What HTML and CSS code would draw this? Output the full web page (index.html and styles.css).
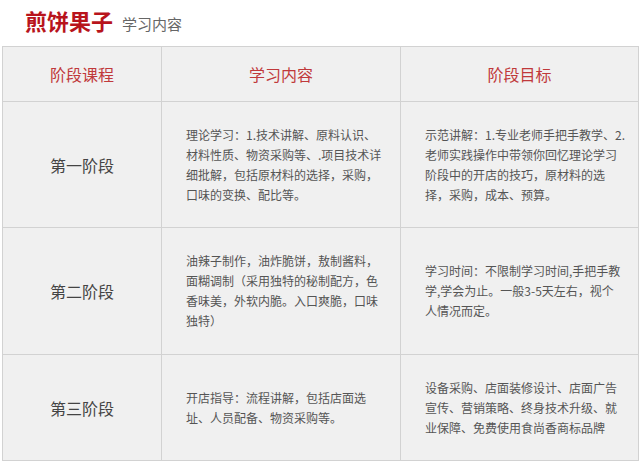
FILE: index.html
```html
<!DOCTYPE html>
<html lang="zh-CN">
<head>
<meta charset="utf-8">
<title>煎饼果子 学习内容</title>
<link rel="stylesheet" href="styles.css">
</head>
<body>
<div class="page">
  <header class="heading">
    <h1 class="title">煎饼果子</h1>
    <span class="subtitle">学习内容</span>
  </header>
  <table class="course">
    <colgroup>
      <col class="c1"><col class="c2"><col class="c3">
    </colgroup>
    <thead>
      <tr class="head-row">
        <th>阶段课程</th>
        <th>学习内容</th>
        <th>阶段目标</th>
      </tr>
    </thead>
    <tbody>
      <tr class="r1">
        <td class="stage">第一阶段</td>
        <td class="desc">理论学习：1.技术讲解、原料认识、<br>材料性质、物资采购等、.项目技术详<br>细批解，包括原材料的选择，采购，<br>口味的变换、配比等。</td>
        <td class="desc">示范讲解：1.专业老师手把手教学、2.<br>老师实践操作中带领你回忆理论学习<br>阶段中的开店的技巧，原材料的选<br>择，采购，成本、预算。</td>
      </tr>
      <tr class="r2">
        <td class="stage">第二阶段</td>
        <td class="desc">油辣子制作，油炸脆饼，敖制酱料，<br>面糊调制（采用独特的秘制配方，色<br>香味美，外软内脆。入口爽脆，口味<br>独特）</td>
        <td class="desc">学习时间：不限制学习时间,手把手教<br>学,学会为止。一般3-5天左右，视个<br>人情况而定。</td>
      </tr>
      <tr class="r3">
        <td class="stage">第三阶段</td>
        <td class="desc">开店指导：流程讲解，包括店面选<br>址、人员配备、物资采购等。</td>
        <td class="desc">设备采购、店面装修设计、店面广告<br>宣传、营销策略、终身技术升级、就<br>业保障、免费使用食尚香商标品牌</td>
      </tr>
    </tbody>
  </table>
</div>
</body>
</html>
```
FILE: styles.css
```css
html, body {
  margin: 0;
  padding: 0;
  background: #ffffff;
}
body {
  font-family: "Noto Sans CJK SC", "Noto Sans", sans-serif;
  color: #555;
}
.page {
  width: 640px;
}
.heading {
  display: flex;
  align-items: baseline;
  height: 46px;
  padding-left: 25px;
  box-sizing: border-box;
  padding-top: 5px;
}
.title {
  margin: 0;
  font-size: 22px;
  line-height: 30px;
  font-weight: bold;
  color: #b8141c;
  letter-spacing: 0;
}
.subtitle {
  margin-left: 9px;
  font-size: 15px;
  color: #666;
}
.course {
  margin-left: 2px;
  width: 636px;
  border-collapse: collapse;
  table-layout: fixed;
  background: #f0f0f0;
}
.c1 { width: 159px; }
.c2 { width: 239px; }
.c3 { width: 238px; }
.course th,
.course td {
  border: 1px solid #d2d2d2;
  padding: 0;
}
.course th {
  height: 54px;
  font-size: 16px;
  font-weight: normal;
  color: #c0393b;
  text-align: center;
}
.r1 td { height: 125px; }
.r2 td { height: 126px; }
.r3 td { height: 105px; }
.stage {
  text-align: center;
  font-size: 16px;
  color: #444;
}
.desc {
  font-size: 12px;
  line-height: 20px;
  padding: 0 12px 0 24px !important;
  color: #555;
  vertical-align: middle;
}
```
